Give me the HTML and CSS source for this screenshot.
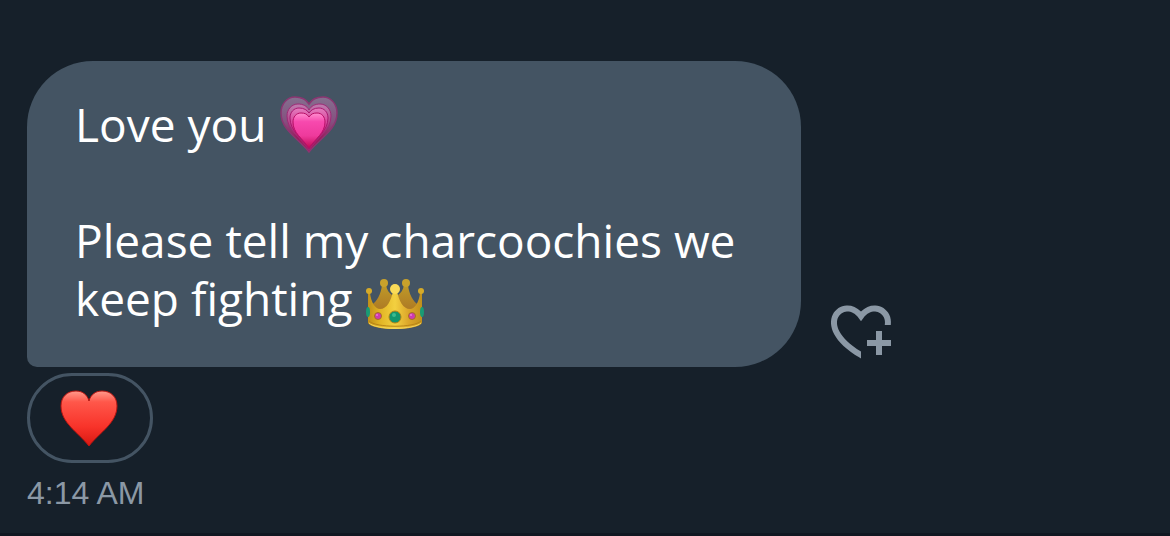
FILE: index.html
```html
<!DOCTYPE html>
<html lang="en">
<head>
    <meta charset="UTF-8">
    <meta name="viewport" content="width=device-width, initial-scale=1.0">
    <title>Messages</title>
    <link rel="stylesheet" href="styles.css">
</head>
<body>

<main class="conversation">
    <div class="message-row">
        <div class="bubble">
            <p>Love you
                <svg class="emoji" viewBox="0 -1 58 58" role="img" aria-label="growing heart">
                    <defs>
                        <linearGradient id="pink" x1="0" y1="0" x2="0" y2="1">
                            <stop offset="0" stop-color="#ff8fd0"/>
                            <stop offset="0.25" stop-color="#f749ae"/>
                            <stop offset="0.65" stop-color="#ee3a9c"/>
                            <stop offset="1" stop-color="#c20a55"/>
                        </linearGradient>
                        <linearGradient id="outer" x1="0" y1="0" x2="0" y2="1">
                            <stop offset="0" stop-color="#84708f"/>
                            <stop offset="0.45" stop-color="#85507f"/>
                            <stop offset="0.75" stop-color="#9c1a5c"/>
                            <stop offset="1" stop-color="#b80d50"/>
                        </linearGradient>
                        <linearGradient id="middle" x1="0" y1="0" x2="0" y2="1">
                            <stop offset="0" stop-color="#c07db0"/>
                            <stop offset="0.5" stop-color="#b23a83"/>
                            <stop offset="1" stop-color="#b80d54"/>
                        </linearGradient>
                        <linearGradient id="inner" x1="0" y1="0" x2="0" y2="1">
                            <stop offset="0" stop-color="#e47dbf"/>
                            <stop offset="0.5" stop-color="#cf2f8b"/>
                            <stop offset="1" stop-color="#b80d54"/>
                        </linearGradient>
                    </defs>
                    <path fill="url(#outer)" stroke="#8b3672" stroke-width="1.5" d="M29 8C26 3 21 1 15 1 7 1 1 8 1 17c0 17 17 25 28 39 11-14 28-22 28-39C57 8 51 1 43 1c-6 0-11 2-14 7z"/>
                    <path fill="url(#middle)" stroke="#a02a76" stroke-width="1" d="M29 14c-2-4-6-6-11-6-6 0-11 5-11 12 0 14 13 21 22 34 9-13 22-20 22-34 0-7-5-12-11-12-5 0-9 2-11 6z"/>
                    <path fill="url(#inner)" stroke="#a81870" stroke-width="1" d="M29 17c-2-3-5-5-10-5-5 0-9 4-9 10 0 13 11 19 19 31 8-12 19-18 19-31 0-6-4-10-9-10-5 0-8 2-10 5z"/>
                    <path fill="url(#pink)" stroke="#b80f66" stroke-width="1" d="M29 21c-2-3-4-4-8-4-5 0-8 4-8 9 0 11 9 16 16 26 7-10 16-15 16-26 0-5-3-9-8-9-4 0-6 1-8 4z"/>
                </svg>
            </p>
            <p class="blank"></p>
            <p>Please tell my charcoochies we keep fighting
                <svg class="emoji" viewBox="0 0 58 58" role="img" aria-label="crown">
                    <defs>
                        <linearGradient id="gold" x1="0" y1="0" x2="1" y2="0">
                            <stop offset="0" stop-color="#c08f18"/>
                            <stop offset="0.22" stop-color="#e2b424"/>
                            <stop offset="0.5" stop-color="#f3d040"/>
                            <stop offset="0.75" stop-color="#dca62a"/>
                            <stop offset="1" stop-color="#c0901c"/>
                        </linearGradient>
                        <linearGradient id="back" x1="0" y1="0" x2="0" y2="1">
                            <stop offset="0" stop-color="#bf9a28"/>
                            <stop offset="1" stop-color="#ab7424"/>
                        </linearGradient>
                    </defs>
                    <path fill="url(#back)" d="M5 36c6-3 10-11 11-20h4c1 5 3 8 6 10h6c3-2 5-5 6-10h4c1 9 5 17 11 20l-8 9H13z"/>
                    <circle cx="18" cy="14" r="4" fill="#c9a22b"/>
                    <circle cx="40" cy="14" r="4" fill="#c9a22b"/>
                    <path fill="url(#gold)" d="M2 24h2c1 9 5 16 10 16 7 0 11-8 13-18h4c2 10 6 18 13 18 5 0 9-7 10-16h2v30c-5 8-49 8-54 0z"/>
                    <circle cx="3" cy="22" r="3" fill="#d5aa29"/>
                    <circle cx="55" cy="22" r="3" fill="#d5aa29"/>
                    <circle cx="29" cy="20" r="5" fill="#fadb58"/>
                    <path fill="none" stroke="#b98517" stroke-width="1" d="M3 52c7 7 45 7 52 0"/>
                    <path fill="none" stroke="#f5d55b" stroke-width="1" d="M3 54c7 7 45 7 52 0"/>
                    <ellipse cx="2" cy="43" rx="2" ry="5" fill="#199b75"/>
                    <ellipse cx="56" cy="43" rx="2" ry="5" fill="#199b75"/>
                    <circle cx="12" cy="47" r="3.5" fill="#ce3bb1" stroke="#a7731d"/>
                    <circle cx="46" cy="47" r="3.5" fill="#ce3bb1" stroke="#a7731d"/>
                    <circle cx="29" cy="48" r="6" fill="#12966d" stroke="#b0811b"/>
                    <circle cx="28" cy="46" r="2" fill="#39bb91"/>
                    <circle cx="11" cy="46" r="1" fill="#ec79d8"/>
                    <circle cx="45" cy="46" r="1" fill="#ec79d8"/>
                </svg>
            </p>
        </div>
        <button type="button" class="react-btn" aria-label="Add reaction">
            <svg viewBox="0 0 24 24" aria-hidden="true">
                <path d="M17 12v3h-2.998v2h3v3h2v-3h3v-2h-3.001v-3H17zm-5 6.839c-3.871-2.34-6.053-4.639-7.127-6.609-1.112-2.04-1.031-3.7-.479-4.82.561-1.13 1.667-1.84 2.91-1.91 1.222-.06 2.68.51 3.892 2.16l.806 1.09.805-1.09c1.211-1.65 2.668-2.22 3.89-2.16 1.242.07 2.347.78 2.908 1.91.334.677.49 1.554.321 2.59h2.011c.153-1.283-.039-2.469-.539-3.48-.887-1.79-2.647-2.91-4.601-3.01-1.65-.09-3.367.56-4.796 2.01-1.43-1.45-3.147-2.1-4.798-2.01-1.954.1-3.714 1.22-4.601 3.01-.896 1.81-.846 4.17.514 6.67 1.353 2.48 4.003 5.12 8.382 7.67l.502.299v-2.32z"/>
            </svg>
        </button>
    </div>

    <button type="button" class="reaction" aria-label="1 heart reaction">
        <svg viewBox="0 0 58 58" aria-hidden="true">
            <defs>
                <linearGradient id="red" x1="0" y1="0" x2="0" y2="1">
                    <stop offset="0" stop-color="#ff9a8c"/>
                    <stop offset="0.2" stop-color="#ff574a"/>
                    <stop offset="0.65" stop-color="#f8332a"/>
                    <stop offset="1" stop-color="#d81812"/>
                </linearGradient>
            </defs>
            <path fill="url(#red)" stroke="#b9140f" stroke-width="1" d="M29 12C27 5 22 2 16 2 7 2 1 8 1 17c0 17 17 26 28 40 11-14 28-23 28-40 0-9-6-15-15-15-6 0-11 3-13 10z"/>
        </svg>
    </button>

    <time class="time" datetime="04:14">4:14 AM</time>
</main>

</body>
</html>
```

FILE: styles.css
```css
body {
    margin: 0;
    min-height: 100vh;
    box-sizing: border-box;
    background-color: #16202a;
    border-bottom: 3px solid #101721;
    color: #fff;
    font-family: "Open Sans", "Noto Sans", sans-serif;
}
.conversation {
    display: flex;
    flex-direction: column;
    align-items: flex-start;
    padding: 61px 27px 0;
}
.message-row {
    display: flex;
    align-items: flex-end;
    gap: 24px;
}
.bubble {
    box-sizing: border-box;
    max-width: 774px;
    padding: 34px 48px 40px;
    border-radius: 66px 66px 66px 10px;
    background-color: #445463;
    font-size: 46px;
    line-height: 58px;
}
.bubble p {
    margin: 0;
}
.bubble .blank {
    height: 58px;
}
.emoji {
    width: 58px;
    height: 58px;
    margin-left: 2px;
    vertical-align: top;
    overflow: visible;
}
.react-btn {
    flex: none;
    padding: 0;
    border: none;
    background: none;
    cursor: pointer;
}
.react-btn svg {
    display: block;
    width: 72px;
    height: 72px;
    fill: #8b98a5;
}
.reaction {
    display: flex;
    margin-top: 6px;
    padding: 13px 32px 13px 30px;
    border: 3px solid #445463;
    border-radius: 45px;
    background: none;
    cursor: pointer;
}
.reaction svg {
    width: 58px;
    height: 58px;
}
.time {
    margin-top: 8px;
    color: #8b98a5;
    font-family: "Liberation Sans", Arial, sans-serif;
    font-size: 32px;
    line-height: 44px;
}
```
